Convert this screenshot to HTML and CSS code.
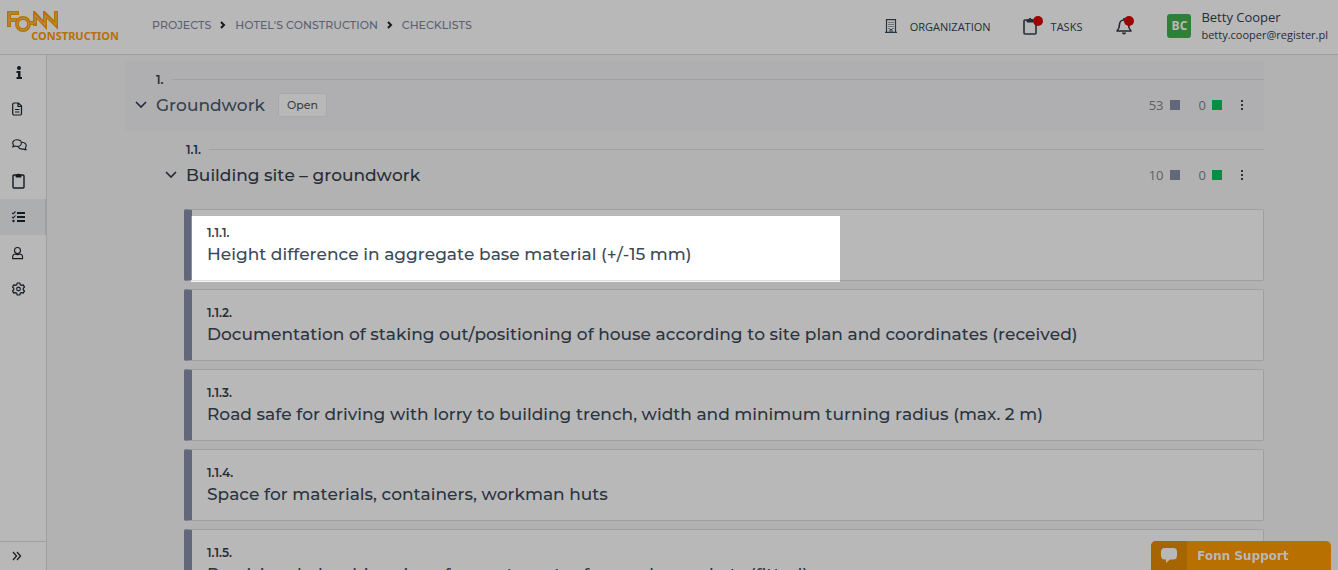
FILE: index.html
```
<!DOCTYPE html>
<html lang="en">
<head>
    <meta charset="UTF-8">
    <title>Fonn Construction - Checklists</title>
    <link rel="stylesheet" href="styles.css">
</head>
<body>
    <header class="topbar">
        <a class="logo" href="#" aria-label="Fonn Construction">
            <svg class="logo-mark" width="52" height="22" viewBox="0 0 52 22" fill="none">
                <g stroke="#ff9c00" stroke-width="4">
                    <path d="M2 16V2h10M2 9h8"/>
                    <circle cx="16" cy="13" r="6"/>
                    <path d="M22 12h6M28 15V3l10 11V3l11 11V0"/>
                </g>
                <g stroke="#f8cf8a" stroke-width="1">
                    <path d="M2 15V2h9M2 9h7"/>
                    <circle cx="16" cy="13" r="6"/>
                    <path d="M23 12h5V4l10 10V4l11 10V1"/>
                </g>
            </svg>
            <span class="logo-text">CONSTRUCTION</span>
        </a>
        <nav class="breadcrumb">
            <a href="#">PROJECTS</a>
            <svg width="6" height="8" viewBox="0 0 6 8"><path d="M1 1l3 3-3 3" fill="none" stroke="#222" stroke-width="2"/></svg>
            <a href="#">HOTEL'S CONSTRUCTION</a>
            <svg width="6" height="8" viewBox="0 0 6 8"><path d="M1 1l3 3-3 3" fill="none" stroke="#222" stroke-width="2"/></svg>
            <a href="#">CHECKLISTS</a>
        </nav>
        <nav class="top-links">
            <a class="top-link organization" href="#">
                <svg width="12" height="14" viewBox="0 0 12 14" fill="none" stroke="#34495e">
                    <path d="M1.5 13V.7h9V13M0 13.4h12" stroke-width="1.2"/>
                    <path d="M3.5 3.5h1M5.5 3.5h1M7.5 3.5h1M3.5 5.5h1M5.5 5.5h1M7.5 5.5h1M3.5 7.5h1M5.5 7.5h1M7.5 7.5h1M3.5 9.5h1M7.5 9.5h1" stroke-width="1.2"/>
                    <path d="M5 13v-2.5h2V13"/>
                </svg>
                ORGANIZATION
            </a>
            <a class="top-link tasks" href="#">
                <span class="icon-wrap">
                    <svg width="14" height="18" viewBox="0 0 14 18" fill="none" stroke="#34404e" stroke-width="1.6">
                        <rect x="1" y="3" width="12" height="14" rx="1"/>
                        <path d="M4 5V3h1.5a1.5 1.5 0 0 1 3 0H10v2z" fill="#34404e" stroke-width="1"/>
                    </svg>
                    <span class="dot"></span>
                </span>
                TASKS
            </a>
            <button class="bell" type="button" aria-label="Notifications">
                <span class="icon-wrap">
                    <svg width="16" height="18" viewBox="0 0 16 18" fill="none" stroke="#2c3846" stroke-width="1.6">
                        <path d="M1 14c2-2 2.5-3 2.5-6.5C3.5 5 5.5 3 8 3s4.5 2 4.5 4.5C12.5 11 13 12 15 14z" stroke-linejoin="round"/>
                        <path d="M8 3V1"/>
                        <path d="M6 15.5a2 2 0 0 0 4 0z" fill="#2c3846" stroke="none"/>
                    </svg>
                    <span class="dot"></span>
                </span>
            </button>
            <div class="user">
                <span class="avatar">BC</span>
                <div>
                    <div class="user-name">Betty Cooper</div>
                    <div class="user-mail">betty.cooper@register.pl</div>
                </div>
            </div>
        </nav>
    </header>

    <div class="layout">
        <aside class="sidebar">
            <a href="#" aria-label="Info">
                <svg width="16" height="16" viewBox="0 0 16 16" fill="#1b2430">
                    <circle cx="7" cy="3" r="2"/>
                    <path d="M4.5 6h4v6H10v2H4.5v-2H6V8H4.5z"/>
                </svg>
            </a>
            <a href="#" aria-label="Documents">
                <svg width="16" height="16" viewBox="0 0 16 16" fill="none" stroke="#1b2430" stroke-width="1.2">
                    <path d="M.7 3.5A1.5 1.5 0 0 1 2.2 2H6.5L9.500 5v7.500A1.500 1.500 0 0 1 8 14H2.200a1.500 1.500 0 0 1-1.500-1.500zM6 2.500v3h3.500"/>
                    <path d="M3 8.5h4.5M3 11h4.5"/>
                </svg>
            </a>
            <a href="#" aria-label="Messages">
                <svg width="16" height="16" viewBox="0 0 16 16" fill="none" stroke="#1b2430" stroke-width="1.1" stroke-linejoin="round">
                    <path d="M5 2.7c2.5 0 4.400 1.400 4.400 3.300S7.500 9.500 5 9.500c-.8 0-1.500-.2-2-.4L.6 10c.6-.6.8-1.300.9-2C-.3 5.500 1.500 2.700 5 2.700z"/>
                    <path d="M10 5.3c2.5.3 4.200 1.800 4.200 3.500 0 .8-.3 1.500-.9 2 .1.900.4 1.500.9 2-1 0-1.900-.3-2.500-.8-2.800.5-4.800-.5-5.600-2.200"/>
                </svg>
            </a>
            <a href="#" aria-label="Tasks">
                <svg width="14" height="18" viewBox="0 0 14 18" fill="none" stroke="#1b2430" stroke-width="1.4">
                    <rect x="1" y="3" width="11" height="13" rx="1"/>
                    <path d="M4 5V3h1.2a1.4 1.4 0 0 1 2.6 0H9v2z" fill="#1b2430" stroke-width="1"/>
                </svg>
            </a>
            <a class="active" href="#" aria-label="Checklists">
                <svg width="16" height="16" viewBox="0 0 16 16" fill="none" stroke="#1b2430">
                    <path d="M5 4h8M5 8h8M5 12h8" stroke-width="1.8"/>
                    <path d="M0 3.800l1.200 1L3.500 2.500M0 8l1.200 1L3.500 6.500" stroke-width="1.1"/>
                    <circle cx="1.5" cy="12" r="1.2" fill="#1b2430" stroke="none"/>
                </svg>
            </a>
            <a href="#" aria-label="Users">
                <svg width="16" height="16" viewBox="0 0 16 16" fill="none" stroke="#1b2430" stroke-width="1.1">
                    <circle cx="5.5" cy="5.5" r="3"/>
                    <path d="M3.300 9C1.600 9.200.6 10.400.6 12v1.600h10V12c0-1.600-1-2.800-2.700-3-1.500.8-3.100.8-4.600 0z" stroke-linejoin="round"/>
                </svg>
            </a>
            <a href="#" aria-label="Settings">
                <svg width="16" height="16" viewBox="0 0 16 16" fill="none" stroke="#1b2430" stroke-width="1.2" stroke-linejoin="round">
                    <path d="M5.200 2h2.600l.4 1.700 1.300.7 1.700-.5 1.300 2.200L11.200 7.300v1.400l1.300 1.200-1.300 2.200-1.700-.5-1.300.7L7.800 14H5.200l-.4-1.700-1.300-.7-1.700.5L.5 9.900l1.300-1.200V7.300L.5 6.100l1.300-2.200 1.700.5 1.300-.7z"/>
                    <circle cx="6.5" cy="8" r="1.8"/>
                </svg>
            </a>
            <button class="expand" type="button" aria-label="Expand menu">
                <svg width="10" height="10" viewBox="0 0 10 10" fill="none" stroke="#2b2b2b" stroke-width="1.3">
                    <path d="M1 1l3.500 4L1 9M5 1l3.500 4L5 9"/>
                </svg>
            </button>
        </aside>

        <main class="content">
            <section class="group group-top">
                <div class="number-row"><span>1.</span></div>
                <div class="title-row">
                    <button class="toggle" type="button" aria-label="Collapse">
                        <svg width="12" height="8" viewBox="0 0 12 8"><path d="M1 1l5 5 5-5" fill="none" stroke="#2c3a4a" stroke-width="1.6"/></svg>
                    </button>
                    <h2>Groundwork</h2>
                    <button class="status" type="button">Open</button>
                    <div class="counts">
                        <span class="count">53 <i class="square gray"></i></span>
                        <span class="count">0 <i class="square green"></i></span>
                        <button class="more" type="button" aria-label="More">
                            <svg width="4" height="12" viewBox="0 0 4 12" fill="#444"><path d="M0 1h2v2H0zM0 5h2v2H0zM0 9h2v2H0z"/></svg>
                        </button>
                    </div>
                </div>
            </section>

            <section class="group group-sub">
                <div class="number-row"><span>1.1.</span></div>
                <div class="title-row">
                    <button class="toggle" type="button" aria-label="Collapse">
                        <svg width="12" height="8" viewBox="0 0 12 8"><path d="M1 1l5 5 5-5" fill="none" stroke="#2c3a4a" stroke-width="1.6"/></svg>
                    </button>
                    <h3>Building site – groundwork</h3>
                    <div class="counts">
                        <span class="count">10 <i class="square gray"></i></span>
                        <span class="count">0 <i class="square green"></i></span>
                        <button class="more" type="button" aria-label="More">
                            <svg width="4" height="12" viewBox="0 0 4 12" fill="#444"><path d="M0 1h2v2H0zM0 5h2v2H0zM0 9h2v2H0z"/></svg>
                        </button>
                    </div>
                </div>
            </section>

            <ul class="checklist">
                <li class="card">
                    <div class="spotlight"></div>
                    <div class="card-number">1.1.1.</div>
                    <div class="card-title">Height difference in aggregate base material (+/-15 mm)</div>
                </li>
                <li class="card">
                    <div class="card-number">1.1.2.</div>
                    <div class="card-title">Documentation of staking out/positioning of house according to site plan and coordinates (received)</div>
                </li>
                <li class="card">
                    <div class="card-number">1.1.3.</div>
                    <div class="card-title">Road safe for driving with lorry to building trench, width and minimum turning radius (max. 2 m)</div>
                </li>
                <li class="card">
                    <div class="card-number">1.1.4.</div>
                    <div class="card-title">Space for materials, containers, workman huts</div>
                </li>
                <li class="card">
                    <div class="card-number">1.1.5.</div>
                    <div class="card-title">Provisional plumbing rings for waste water from valve gaskets (fitted)</div>
                </li>
            </ul>
        </main>
    </div>

    <button class="support" type="button">
        <span class="support-icon">
            <svg width="18" height="17" viewBox="0 0 18 17" fill="#fff"><path d="M5 1h8c3 0 4 1.500 4 4v3c0 3-1 4.500-4 4.500h-3L6 16v-3.500H5C2 12.500 1 11 1 8V5c0-2.500 1-4 4-4z"/></svg>
        </span>
        <span class="support-label">Fonn Support</span>
    </button>
</body>
</html>
```
FILE: styles.css
```
* {
    box-sizing: border-box;
}

body {
    margin: 0;
    height: 100vh;
    display: flex;
    flex-direction: column;
    overflow: hidden;
    background-color: #f7f7f7;
    color: #34404e;
    font-family: Montserrat, Inter, sans-serif;
    font-kerning: none;
}

a {
    text-decoration: none;
    color: inherit;
}

button {
    border: none;
    padding: 0;
    background: none;
    font-family: inherit;
    cursor: pointer;
}

svg {
    display: block;
}

/* Top bar */
.topbar {
    display: flex;
    flex: none;
    align-items: center;
    height: 55px;
    padding: 0 10px 0 7px;
    background-color: #fff;
    border-bottom: 1px solid #ddd;
}

.logo {
    display: flex;
    flex-direction: column;
    width: 112px;
    margin-right: 33px;
    color: #ff9c00;
}

.logo-text {
    align-self: flex-end;
    margin-top: -4px;
    font: bold 11px/14px "Noto Sans", sans-serif;
}

.breadcrumb {
    display: flex;
    align-items: center;
    gap: 9px;
    height: 50px;
    padding-bottom: 5px;
    color: #7d859f;
    font-size: 11px;
    font-weight: 500;
}

.top-links {
    display: flex;
    align-items: center;
    margin-top: -2px;
    margin-left: auto;
    font-family: "Open Sans", sans-serif;
}

.top-link {
    display: flex;
    align-items: center;
    font-size: 11px;
}

.organization {
    gap: 13px;
    margin-right: 32px;
}

.tasks {
    gap: 14px;
    margin-right: 34px;
}

.icon-wrap {
    position: relative;
    display: block;
}

.dot {
    position: absolute;
    top: -1px;
    right: -6px;
    width: 10px;
    height: 10px;
    border-radius: 50%;
    background-color: #dd0000;
}

.bell {
    margin-right: 35px;
}

.bell .dot {
    right: -2px;
}

.user {
    display: flex;
    align-items: center;
    gap: 10px;
}

.avatar {
    width: 24px;
    height: 24px;
    border-radius: 3px;
    background-color: #43b14b;
    color: #fff;
    font-size: 12px;
    font-weight: bold;
    line-height: 24px;
    text-align: center;
}

.user-name {
    font-size: 13px;
    line-height: 18px;
}

.user-mail {
    font-size: 11px;
    line-height: 18px;
}

.layout {
    display: flex;
    flex: 1;
    min-height: 0;
}

/* Side menu */
.sidebar {
    display: flex;
    flex: none;
    flex-direction: column;
    width: 47px;
    background-color: #fff;
    border-right: 1px solid #ddd;
}

.sidebar a {
    display: flex;
    align-items: center;
    height: 36px;
    padding-left: 12px;
}

.sidebar .active {
    background-color: #eff1f4;
    border-right: 1px solid #d8dce3;
}

.expand {
    height: 29px;
    margin-top: auto;
    padding-left: 12px;
    border-top: 1px solid #ddd;
}

/* Checklist */
.content {
    flex: 1;
    min-width: 0;
    padding: 6px 74px 0 78px;
}

.group {
    height: 70px;
    padding-top: 10px;
}

.group-top {
    padding-left: 10px;
    background-color: #f3f3f7;
}

.group-sub {
    padding-left: 40px;
}

.number-row {
    display: flex;
    align-items: center;
    gap: 8px;
    height: 16px;
    padding-left: 21px;
    font-size: 12px;
    font-weight: 600;
}

.number-row::after {
    content: "";
    flex: 1;
    height: 1px;
    background-color: #e0e0e2;
}

.title-row {
    display: flex;
    align-items: center;
    height: 36px;
}

.toggle {
    width: 21px;
}

h2, h3 {
    margin: 0;
    font-size: 17px;
    font-weight: 500;
    line-height: 20px;
}

h2 {
    color: #4a5a6c;
}

.status {
    height: 24px;
    margin-left: 13px;
    padding: 0 8px;
    border: 1px solid #ebebeb;
    border-radius: 3px;
    background-color: #fff;
    color: #555;
    font-size: 11px;
    font-weight: 500;
}

.counts {
    display: flex;
    align-items: center;
    margin-left: auto;
    padding-right: 19px;
    color: #858585;
    font: 13px "Open Sans", sans-serif;
}

.count {
    display: flex;
    align-items: center;
    gap: 6px;
    margin-right: 19px;
}

.square {
    width: 10px;
    height: 10px;
}

.gray {
    background-color: #8890a9;
}

.green {
    background-color: #00c75c;
}

.checklist {
    margin: 0;
    padding: 8px 0 0 59px;
    list-style: none;
}

.card {
    position: relative;
    height: 72px;
    margin-bottom: 8px;
    padding: 15px 15px 0;
    border: 1px solid #ddd;
    border-left: 8px solid #8890a9;
    border-radius: 2px;
    background-color: #fff;
}

.card-number {
    font-size: 12px;
    font-weight: 600;
    line-height: 16px;
}

.card-title {
    color: #3c4958;
    font-size: 17px;
    font-weight: 500;
    line-height: 26px;
    white-space: nowrap;
}

/* Dims everything except the first item */
.spotlight {
    position: absolute;
    z-index: 10;
    top: 6px;
    left: -1px;
    right: 39.5%;
    height: 66px;
    box-shadow: 0 0 0 200vmax rgba(0, 0, 0, 0.28);
    pointer-events: none;
}

.support {
    position: fixed;
    right: 7px;
    bottom: 0;
    display: flex;
    width: 180px;
    height: 29px;
    overflow: hidden;
    border-radius: 5px 5px 0 0;
    background-color: #ff9c00;
    color: #fff;
}

.support-icon {
    display: flex;
    align-items: center;
    justify-content: center;
    width: 36px;
    height: 29px;
    background-color: #e68c00;
}

.support-label {
    padding-left: 10px;
    font: bold 12px/30px "DejaVu Sans", sans-serif;
}
```
